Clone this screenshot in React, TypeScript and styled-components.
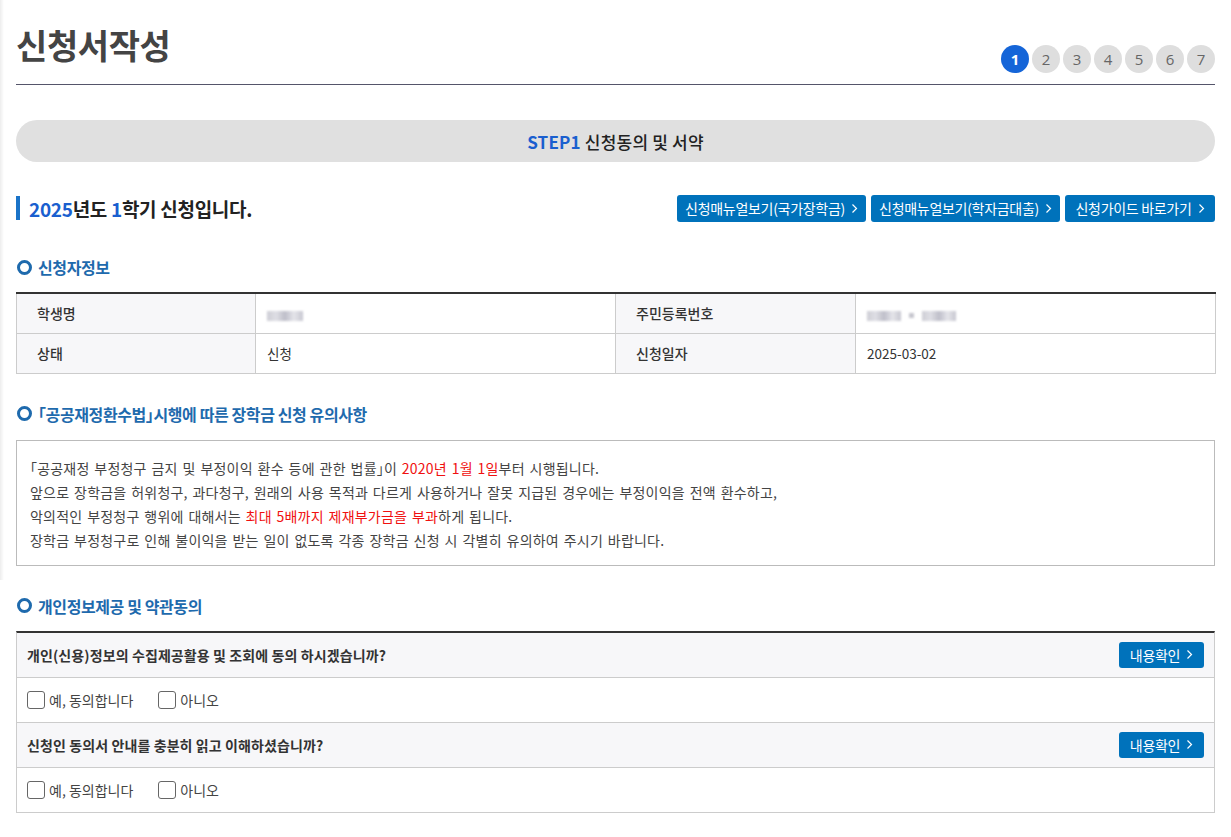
import React, { ReactElement } from 'react';
import styled, { createGlobalStyle } from 'styled-components';

const GlobalStyle = createGlobalStyle`
  html, body {
    margin: 0;
    padding: 0;
    background: #fff;
  }
  body {
    font-family: "Noto Sans CJK KR", "Noto Sans", sans-serif;
    color: #333;
  }
  * {
    box-sizing: border-box;
  }
`;

const Page = styled.div`
  position: relative;
  padding: 0 16px 40px 16px;
  width: 1231px;

  &::before {
    content: '';
    position: absolute;
    left: 0;
    top: 0;
    width: 4px;
    height: 580px;
    background: linear-gradient(to right, rgba(0, 0, 0, 0.07), rgba(0, 0, 0, 0));
  }
`;

const Header = styled.header`
  display: flex;
  justify-content: space-between;
  align-items: flex-start;
  height: 85px;
  padding-top: 26px;
  border-bottom: 1px solid #55556a;
`;

const PageTitle = styled.h1`
  margin: 0;
  font-size: 34px;
  line-height: 38px;
  font-weight: 700;
  color: #444;
  letter-spacing: -0.4px;
`;

const Steps = styled.ol`
  display: flex;
  gap: 3px;
  list-style: none;
  margin: 19px 0 0 0;
  padding: 0;
`;

const Step = styled.li<{ $active?: boolean }>`
  width: 28px;
  height: 28px;
  border-radius: 50%;
  display: flex;
  align-items: center;
  justify-content: center;
  font-family: "Open Sans", "Noto Sans", sans-serif;
  font-size: 15px;
  font-weight: ${(p) => (p.$active ? 700 : 400)};
  background: ${(p) => (p.$active ? '#1565d8' : '#dedede')};
  color: ${(p) => (p.$active ? '#fff' : '#666')};
`;

const StepBar = styled.div`
  margin-top: 35px;
  height: 42px;
  border-radius: 21px;
  background: #e0e0e0;
  display: flex;
  align-items: center;
  justify-content: center;
  font-size: 17px;
  font-weight: 500;
  color: #222;
  letter-spacing: 0.2px;
`;

const Blue = styled.span`
  color: #1a5fcf;
  font-weight: 700;
`;

const TermRow = styled.div`
  margin-top: 32px;
  display: flex;
  align-items: center;
  justify-content: space-between;
  height: 28px;
`;

const TermTitle = styled.h2`
  margin: 0;
  height: 24px;
  display: flex;
  align-items: center;
  border-left: 4px solid #1a73c8;
  padding-left: 9px;
  font-size: 19px;
  font-weight: 700;
  color: #222;
  letter-spacing: -0.3px;
`;

const LinkGroup = styled.div`
  display: flex;
  gap: 5px;
`;

const BlueButton = styled.button<{ $width: number; $height?: number }>`
  width: ${(p) => p.$width}px;
  height: ${(p) => p.$height ?? 27}px;
  border: 0;
  border-radius: 3px;
  background: #0072bb;
  color: #fff;
  font-family: inherit;
  font-size: 14px;
  letter-spacing: -0.3px;
  display: flex;
  align-items: center;
  justify-content: center;
  gap: 6px;
  padding: 0;
  cursor: pointer;

  svg {
    flex: none;
  }
`;

const Section = styled.section<{ $gap: number }>`
  margin-top: ${(p) => p.$gap}px;
`;

const SectionTitle = styled.h3`
  margin: 0 0 15px 0;
  height: 20px;
  display: flex;
  align-items: center;
  gap: 6px;
  font-size: 16px;
  font-weight: 700;
  color: #1e6aad;
  letter-spacing: -0.4px;
  font-feature-settings: "halt" 1;

  &::before {
    content: '';
    flex: none;
    width: 9px;
    height: 9px;
    border: 3px solid #1e6aad;
    border-radius: 50%;
    margin-left: 1px;
  }
`;

const InfoTable = styled.table`
  width: 100%;
  border-collapse: collapse;
  border-top: 2px solid #333;
  table-layout: fixed;
  font-size: 14px;
`;

const Th = styled.th`
  background: #f7f7f9;
  border: 1px solid #ccc;
  text-align: left;
  font-weight: 500;
  color: #333;
  padding: 0 20px;
  height: 40px;
`;

const Td = styled.td`
  border: 1px solid #ccc;
  padding: 0 11px;
  height: 40px;
  color: #333;
  font-size: 13.5px;
`;

const Blur = styled.span<{ $width: number }>`
  display: inline-block;
  vertical-align: middle;
  width: ${(p) => p.$width}px;
  height: 10px;
  background: linear-gradient(to right, #c9c9d1, #dcdce2, #b8b8c4, #e2e2e8, #c2c2cc);
  filter: blur(1.2px);
  opacity: 0.9;
`;

const Dot = styled.span`
  display: inline-block;
  vertical-align: middle;
  width: 5px;
  height: 5px;
  margin: 0 8px;
  background: #c6c6ce;
  filter: blur(0.8px);
`;

const NoticeBox = styled.div`
  margin-top: 16px;
  border: 1px solid #bbb;
  padding: 15px 13px 13px 13px;
  font-size: 14px;
  line-height: 24px;
  color: #444;
  letter-spacing: 0.2px;
  word-spacing: 1.5px;
  font-feature-settings: "halt" 1;
`;

const Line = styled.p`
  margin: 0;
`;

const Red = styled.span`
  color: #f01010;
`;

const AgreeTable = styled.div`
  border-top: 2px solid #333;
  border-left: 1px solid #ccc;
  border-right: 1px solid #ccc;
`;

const QuestionRow = styled.div`
  height: 45px;
  display: flex;
  align-items: center;
  justify-content: space-between;
  padding: 0 10px 0 10px;
  background: #f7f7f9;
  border-bottom: 1px solid #ccc;
  font-size: 14px;
  font-weight: 700;
  color: #333;
  letter-spacing: 0.1px;
`;

const AnswerRow = styled.div`
  height: 45px;
  display: flex;
  align-items: center;
  gap: 25px;
  padding: 0 10px;
  border-bottom: 1px solid #ccc;
  font-size: 14px;
  color: #444;
`;

const CheckLabel = styled.label`
  display: flex;
  align-items: center;
  gap: 4px;
  cursor: pointer;
  letter-spacing: 0;
`;

const Box = styled.span`
  width: 18px;
  height: 18px;
  border: 1px solid #666;
  border-radius: 3px;
  background: #fff;
`;

function Chevron(): ReactElement {
  return (
    <svg width="7" height="11" viewBox="0 0 7 11" fill="none">
      <path d="M1.5 1.5L5.5 5.5L1.5 9.5" stroke="#fff" strokeWidth="1.2" />
    </svg>
  );
}

interface Question {
  text: string;
}

const questions: Question[] = [
  { text: '개인(신용)정보의 수집제공활용 및 조회에 동의 하시겠습니까?' },
  { text: '신청인 동의서 안내를 충분히 읽고 이해하셨습니까?' },
];

export default function App(): ReactElement {
  return (
    <>
      <GlobalStyle />
      <Page>
        <Header>
          <PageTitle>신청서작성</PageTitle>
          <Steps>
            {[1, 2, 3, 4, 5, 6, 7].map((n) => (
              <Step key={n} $active={n === 1}>
                {n}
              </Step>
            ))}
          </Steps>
        </Header>

        <StepBar>
          <Blue>STEP1</Blue>&nbsp;신청동의 및 서약
        </StepBar>

        <TermRow>
          <TermTitle>
            <Blue>2025</Blue>년도&nbsp;<Blue>1</Blue>학기 신청입니다.
          </TermTitle>
          <LinkGroup>
            <BlueButton $width={189}>
              신청매뉴얼보기(국가장학금) <Chevron />
            </BlueButton>
            <BlueButton $width={189}>
              신청매뉴얼보기(학자금대출) <Chevron />
            </BlueButton>
            <BlueButton $width={150}>
              신청가이드 바로가기 <Chevron />
            </BlueButton>
          </LinkGroup>
        </TermRow>

        <Section $gap={35}>
          <SectionTitle>신청자정보</SectionTitle>
          <InfoTable>
            <colgroup>
              <col style={{ width: 239 }} />
              <col style={{ width: 360 }} />
              <col style={{ width: 240 }} />
              <col style={{ width: 360 }} />
            </colgroup>
            <tbody>
              <tr>
                <Th>학생명</Th>
                <Td>
                  <Blur $width={36} />
                </Td>
                <Th>주민등록번호</Th>
                <Td>
                  <Blur $width={34} />
                  <Dot />
                  <Blur $width={34} />
                </Td>
              </tr>
              <tr>
                <Th>상태</Th>
                <Td>신청</Td>
                <Th>신청일자</Th>
                <Td>2025-03-02</Td>
              </tr>
            </tbody>
          </InfoTable>
        </Section>

        <Section $gap={30}>
          <SectionTitle>「공공재정환수법」시행에 따른 장학금 신청 유의사항</SectionTitle>
          <NoticeBox>
            <Line>
              「공공재정 부정청구 금지 및 부정이익 환수 등에 관한 법률」이{' '}
              <Red>2020년 1월 1일</Red>부터 시행됩니다.
            </Line>
            <Line>
              앞으로 장학금을 허위청구, 과다청구, 원래의 사용 목적과 다르게 사용하거나 잘못 지급된
              경우에는 부정이익을 전액 환수하고,
            </Line>
            <Line>
              악의적인 부정청구 행위에 대해서는 <Red>최대 5배까지 제재부가금을 부과</Red>하게 됩니다.
            </Line>
            <Line>
              장학금 부정청구로 인해 불이익을 받는 일이 없도록 각종 장학금 신청 시 각별히 유의하여
              주시기 바랍니다.
            </Line>
          </NoticeBox>
        </Section>

        <Section $gap={30}>
          <SectionTitle>개인정보제공 및 약관동의</SectionTitle>
          <AgreeTable>
            {questions.map((q, index) => (
              <React.Fragment key={index}>
                <QuestionRow>
                  <span>{q.text}</span>
                  <BlueButton $width={85} $height={26}>
                    내용확인 <Chevron />
                  </BlueButton>
                </QuestionRow>
                <AnswerRow>
                  <CheckLabel>
                    <Box />
                    예, 동의합니다
                  </CheckLabel>
                  <CheckLabel>
                    <Box />
                    아니오
                  </CheckLabel>
                </AnswerRow>
              </React.Fragment>
            ))}
          </AgreeTable>
        </Section>
      </Page>
    </>
  );
}
